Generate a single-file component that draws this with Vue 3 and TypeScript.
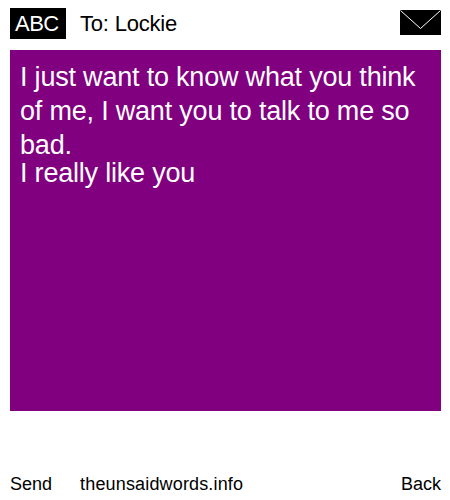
<template>
    <div class="card">
        <div class="top-bar">
            <span class="abc">ABC</span>
            <span class="to">To: {{ recipient }}</span>
            <svg class="envelope" width="41" height="25" viewBox="0 0 41 25">
                <rect width="41" height="25" fill="#000" />
                <path d="M0.5 0.5L20.5 18.5L40.5 0.5" fill="none" stroke="#fff" stroke-width="1" />
            </svg>
        </div>
        <div class="message">
            <p class="first">{{ firstLine }}</p>
            <p class="second">{{ secondLine }}</p>
        </div>
        <div class="footer">
            <span class="send">Send</span>
            <span class="site">theunsaidwords.info</span>
            <span class="back">Back</span>
        </div>
    </div>
</template>

<script setup lang="ts">
const recipient = 'Lockie'
const firstLine = 'I just want to know what you think of me, I want you to talk to me so bad.'
const secondLine = 'I really like you'
</script>

<style scoped>
.card {
    width: 450px;
    height: 500px;
    box-sizing: border-box;
    padding: 8px 9px 0 10px;
    display: flex;
    flex-direction: column;
    font-family: "Liberation Sans", Arial, sans-serif;
    color: #000;
    background: #fff;
}

.top-bar {
    height: 31px;
    display: flex;
    align-items: center;
    margin-bottom: 11px;
}

.abc {
    width: 56px;
    height: 31px;
    box-sizing: border-box;
    padding-left: 5px;
    line-height: 31px;
    background: #000;
    color: #fff;
    font-size: 22px;
    letter-spacing: -0.5px;
}

.to {
    margin-left: 14px;
    font-size: 22px;
    letter-spacing: -0.2px;
}

.envelope {
    margin-left: auto;
    margin-bottom: 2px;
    display: block;
}

.message {
    height: 361px;
    box-sizing: border-box;
    padding: 10px;
    background: #800080;
    color: #fff;
    font-size: 27px;
    letter-spacing: -0.2px;
}

.message p {
    margin: 0;
}

.first {
    line-height: 34px;
}

.second {
    line-height: 23px;
}

.footer {
    display: flex;
    margin-top: 62px;
    font-size: 18px;
    line-height: 22px;
}

.site {
    margin-left: 28px;
    letter-spacing: 0.16px;
}

.back {
    margin-left: auto;
}
</style>
